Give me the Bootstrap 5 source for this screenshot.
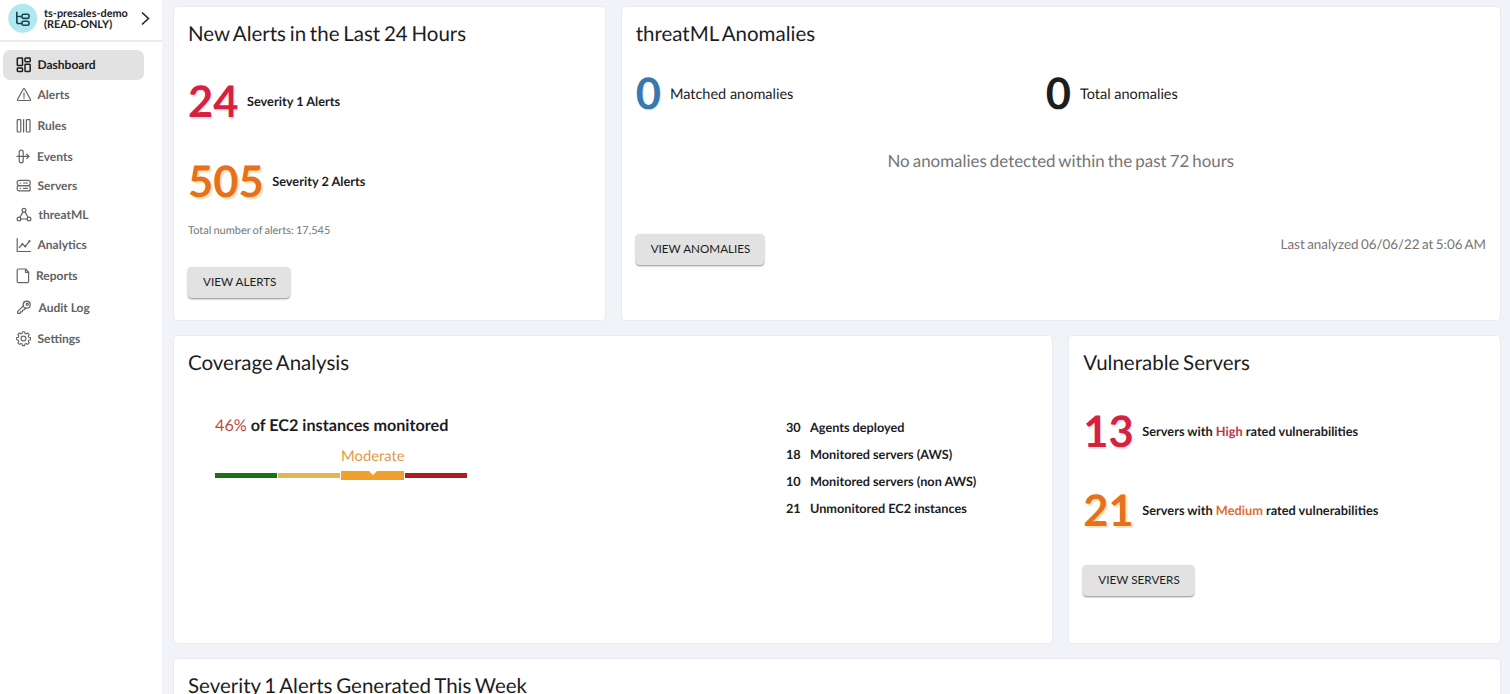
<!DOCTYPE html>
<html lang="en">
<head>
<meta charset="utf-8">
<meta name="viewport" content="width=device-width, initial-scale=1">
<title>Dashboard</title>
<link href="https://cdn.jsdelivr.net/npm/bootstrap@5.3.0/dist/css/bootstrap.min.css" rel="stylesheet">
<style>
  body { font-family: Lato, "Liberation Sans", sans-serif; background: #f2f3f8; color: #1c1d1f; height: 694px; overflow: hidden; text-rendering: geometricPrecision; }
  .side { width: 162px; background: #fff; }
  .account { height: 42px; border-bottom: 2px solid #ebebeb; padding: 3px 0 0 8px; }
  .logo { width: 30px; height: 30px; }
  .account-name { font-size: 10.9px; font-weight: 700; line-height: 11px; margin: 5px 0 0 6px; width: 90px; white-space: nowrap; }
  .chevron { margin: 8px 0 0 6px; }
  .side-nav { padding: 8px 0 0 3px; }
  .side-nav .nav-link { width: 141px; height: 30px; padding: 0 0 0 12px; font-size: 12px; line-height: 30px; font-weight: 700; color: #626365; border-radius: 7px; }
  .side-nav .nav-link.active { background: #e2e2e2; color: #1c1d1f; }
  .side-nav svg { width: 16px; height: 16px; margin-left: .5px; margin-right: 6px; fill: none; stroke: currentColor; stroke-width: 1.2; stroke-linejoin: round; stroke-linecap: round; flex: none; }
  .side-nav .nav-link.active svg { stroke-width: 1.5; }
  .side-nav .nav-link:nth-child(3) { margin-top: .5px; }
  .side-nav .nav-link:nth-child(4) { margin-top: 1px; }
  .side-nav .nav-link:nth-child(4) svg { margin-right: 5.5px; }
  .side-nav .nav-link:nth-child(5), .side-nav .nav-link:nth-child(6) { margin-top: -1px; }
  .side-nav .nav-link:nth-child(6) svg, .side-nav .nav-link:nth-child(9) svg { margin-right: 7px; }
  .side-nav .nav-link:nth-child(8) { margin-top: 1px; }
  .side-nav .nav-link:nth-child(8) svg { margin-right: 4.5px; }
  .side-nav .nav-link:nth-child(9) { margin-top: 2px; }
  .side-nav .nav-link:nth-child(10) { margin-top: 1.5px; }
  .board { padding: 6px 9px 0 11px; min-width: 0; }
  .board .row { --bs-gutter-x: 15px; --bs-gutter-y: 0; margin-bottom: 14px; }
  .panel { background: #fff; border: 1px solid #e9eaef; border-radius: 4px; padding: 13px 14px 0; }
  .top-panel { height: 315px; }
  .mid-panel { height: 309px; }
  .panel-title { font-size: 20.5px; line-height: 29px; font-weight: 400; margin: 0; word-spacing: -1.5px; }
  .figure-row { height: 50px; }
  .big-num { font-size: 43.5px; line-height: 50px; font-weight: 700; margin-top: -2px; }
  .red { color: #d5233f; text-shadow: 1px 2px 1px #fbe3ee; }
  .orange { color: #e6701c; text-shadow: 2px 2px 0 #ffe5b5; }
  .blue { color: #3977ad; text-shadow: 1px 1px 1px #daf5ff; }
  .label-bold { font-size: 12.75px; font-weight: 700; margin-left: 8.500px; }
  .label-plain { font-size: 14.5px; margin-left: 9px; padding-top: 1px; }
  .action { --bs-btn-font-size: 11.7px; --bs-btn-bg: #e2e2e2; --bs-btn-color: #1c1d1f; --bs-btn-border-width: 0; --bs-btn-border-radius: 4px; --bs-btn-padding-x: 15px; --bs-btn-padding-y: 0; line-height: 29px; padding-bottom: 2px; padding-right: 14px; height: 31px; box-shadow: 0 1px 2px rgba(0,0,0,.45); margin-left: 0; }
  .soft { color: #757575; }
  .meter-seg { height: 5px; width: 62px; }
  .moderate { width: 63px; height: 9px; background: #f2a02c; clip-path: polygon(0 0, 28px 0, 32px 4px, 36px 0, 100% 0, 100% 100%, 0 100%); }
  .counts td { padding: 0; font-size: 12.7px; line-height: 27px; font-weight: 700; }
  .counts td:first-child { width: 24px; }
</style>
</head>
<body>
<div class="d-flex h-100">
  <aside class="side flex-shrink-0">
    <div class="account d-flex align-items-start">
      <svg class="logo flex-shrink-0" viewBox="0 0 30 30"><circle cx="14.7" cy="15.3" r="14.5" fill="#afe8f0"/><g fill="none" stroke="#174552" stroke-width="1.6"><path d="M8.8 8.800v9.900q0 1.800 1.800 1.800h3.400M8.800 13.500H14"/><rect x="14" y="11.300" width="7" height="4.100" rx="1.500"/><rect x="14" y="18.200" width="7" height="4.100" rx="1.500"/></g></svg>
      <div class="account-name">ts-presales-demo<br>(READ-ONLY)</div>
      <svg class="chevron" width="12" height="15" viewBox="0 0 12 15" fill="none" stroke="#1c1d1f" stroke-width="1.5"><path d="M2 1.500l6.500 6-6.500 6"/></svg>
    </div>
    <nav class="side-nav nav flex-column flex-nowrap">
      <a class="nav-link active d-flex align-items-center" href="#"><svg viewBox="0 0 16 16"><rect x="1.300" y="1" width="5.200" height="7.600" rx=".7"/><rect x="9" y="1" width="5.200" height="3.800" rx=".7"/><rect x="1.300" y="11" width="5.200" height="3.400" rx=".7"/><rect x="9" y="7.200" width="5.200" height="7.200" rx=".7"/></svg>Dashboard</a>
      <a class="nav-link d-flex align-items-center" href="#"><svg viewBox="0 0 16 16"><path d="M7.200 2.200L1.500 12.500q-.4 1 .7 1h11.600q1.100 0 .7-1L8.800 2.200q-.8-1.200-1.600 0zM8 6v4M8 11.400v.4"/></svg>Alerts</a>
      <a class="nav-link d-flex align-items-center" href="#"><svg viewBox="0 0 16 16"><rect x="1.200" y="1.600" width="3.600" height="12.400" rx=".8"/><path d="M7.600 1.600v12.400"/><rect x="10.400" y="1.600" width="3.600" height="12.400" rx=".8"/></svg>Rules</a>
      <a class="nav-link d-flex align-items-center" href="#"><svg viewBox="0 0 16 16"><rect x="3.200" y="1.200" width="4" height="12.600" rx="2"/><path d="M1 7.400h12M10.700 5.200l2.300 2.200-2.300 2.200"/></svg>Events</a>
      <a class="nav-link d-flex align-items-center" href="#"><svg viewBox="0 0 16 16"><rect x="1.200" y="2.300" width="13" height="5.300" rx="2"/><rect x="1.200" y="7.600" width="13" height="5.300" rx="2"/><path d="M4 5h.5M7.500 5h4M4 10.300h.5M7.500 10.300h4"/></svg>Servers</a>
      <a class="nav-link d-flex align-items-center" href="#"><svg viewBox="0 0 16 16"><circle cx="8" cy="3.200" r="1.900"/><circle cx="3" cy="12" r="1.900"/><circle cx="13" cy="12" r="1.900"/><path d="M7 4.900L4 10.300M9 4.900l3 5.400M5 12h6"/></svg>threatML</a>
      <a class="nav-link d-flex align-items-center" href="#"><svg viewBox="0 0 16 16"><path d="M1.200 1.500v13h13.300M3.300 10.500l3-3.400 3 2.300 4.200-5.200"/><path d="M6.300 7.100h.01M9.300 9.400h.01M13.500 4.200h.01" stroke-width="2.200"/></svg>Analytics</a>
      <a class="nav-link d-flex align-items-center" href="#"><svg viewBox="0 0 16 16"><path d="M2.400 1h7.200l3 3.200v9.200q0 1.200-1.200 1.200H2.400q-1.200 0-1.200-1.200V2.200Q1.200 1 2.400 1zM9.500 1.200v3.100h3"/></svg>Reports</a>
      <a class="nav-link d-flex align-items-center" href="#"><svg viewBox="0 0 16 16"><circle cx="10.700" cy="4.700" r="3.500"/><circle cx="11.300" cy="4.200" r="1.100"/><path d="M7.300 5.800L1.700 11.400v2h2.600l.3-1.600 1.700-.1.200-1.700h1.400L9.700 8.200"/></svg>Audit Log</a>
      <a class="nav-link d-flex align-items-center" href="#"><svg viewBox="0 0 16 16"><g transform="translate(.1 -.4) scale(.93)"><circle cx="8" cy="8.500" r="2.600"/><path d="M6.800 1.300h2.400l.4 1.800 1.200.5 1.600-1 1.700 1.700-1 1.600.5 1.200 1.800.4v2.400l-1.800.4-.5 1.200 1 1.600-1.700 1.700-1.600-1-1.200.5-.4 1.800H6.800l-.4-1.800-1.200-.5-1.600 1-1.700-1.700 1-1.600-.5-1.200-1.800-.4V7.500l1.800-.4.5-1.200-1-1.600 1.700-1.700 1.600 1 1.200-.5z"/></g></svg>Settings</a>
    </nav>
  </aside>

  <main class="board flex-grow-1">
    <div class="row">
      <div class="col-4">
        <section class="panel top-panel">
          <h2 class="panel-title">New Alerts in the Last 24 Hours</h2>
          <div class="figure-row d-flex align-items-center" style="margin-top:28px"><span class="big-num red">24</span><span class="label-bold">Severity 1 Alerts</span></div>
          <div class="figure-row d-flex align-items-center" style="margin-top:30px"><span class="big-num orange">505</span><span class="label-bold">Severity 2 Alerts</span></div>
          <div class="soft" style="font-size:11px;line-height:16px;margin-top:16px;word-spacing:-.7px">Total number of alerts: 17,545</div>
          <button class="btn action" type="button" style="margin-top:28px">VIEW ALERTS</button>
        </section>
      </div>
      <div class="col-8">
        <section class="panel top-panel">
          <h2 class="panel-title">threatML Anomalies</h2>
          <div class="row g-0 mb-0" style="margin-top:20px">
            <div class="figure-row d-flex align-items-center" style="width:410px"><span class="big-num blue">0</span><span class="label-plain">Matched anomalies</span></div>
            <div class="figure-row d-flex align-items-center col"><span class="big-num">0</span><span class="label-plain">Total anomalies</span></div>
          </div>
          <div class="soft text-center" style="font-size:16.9px;line-height:24px;margin-top:30px;word-spacing:-1.2px">No anomalies detected within the past 72 hours</div>
          <div class="d-flex justify-content-between align-items-start" style="margin-top:61px">
            <button class="btn action" type="button">VIEW ANOMALIES</button>
            <span class="soft" style="font-size:13.4px;line-height:20px;word-spacing:-1px">Last analyzed 06/06/22 at 5:06 AM</span>
          </div>
        </section>
      </div>
    </div>

    <div class="row">
      <div class="col-8">
        <section class="panel mid-panel">
          <h2 class="panel-title">Coverage Analysis</h2>
          <div class="d-flex">
            <div style="margin:36px 0 0 27px;width:571px">
              <div style="font-size:16.2px;line-height:23px;font-weight:700"><span style="color:#bd4a3e;font-weight:400">46%</span> of EC2 instances monitored</div>
              <div style="width:252px;padding-left:126px;font-size:14.8px;line-height:20px;margin-top:9px;color:#e29a45">Moderate</div>
              <div class="d-flex align-items-center" style="gap:1px;margin-top:5px;height:9px">
                <div class="meter-seg" style="background:#1a7118"></div>
                <div class="meter-seg" style="background:#e4b555"></div>
                <div class="moderate"></div>
                <div class="meter-seg" style="background:#b01c22"></div>
              </div>
            </div>
            <table class="counts" style="margin-top:36px">
              <tr><td>30</td><td>Agents deployed</td></tr>
              <tr><td>18</td><td>Monitored servers (AWS)</td></tr>
              <tr><td>10</td><td>Monitored servers (non AWS)</td></tr>
              <tr><td>21</td><td>Unmonitored EC2 instances</td></tr>
            </table>
          </div>
        </section>
      </div>
      <div class="col-4">
        <section class="panel mid-panel">
          <h2 class="panel-title">Vulnerable Servers</h2>
          <div class="figure-row d-flex align-items-center" style="margin-top:29px"><span class="big-num red">13</span><span class="label-bold">Servers with <span style="color:#b73843">High</span> rated vulnerabilities</span></div>
          <div class="figure-row d-flex align-items-center" style="margin-top:29px"><span class="big-num orange">21</span><span class="label-bold">Servers with <span style="color:#de6c31">Medium</span> rated vulnerabilities</span></div>
          <button class="btn action" type="button" style="margin-top:29px">VIEW SERVERS</button>
        </section>
      </div>
    </div>

    <div class="row mb-0">
      <div class="col-12">
        <section class="panel top-panel">
          <h2 class="panel-title">Severity 1 Alerts Generated This Week</h2>
        </section>
      </div>
    </div>
  </main>
</div>
<script src="https://cdn.jsdelivr.net/npm/bootstrap@5.3.0/dist/js/bootstrap.bundle.min.js"></script>
</body>
</html>
